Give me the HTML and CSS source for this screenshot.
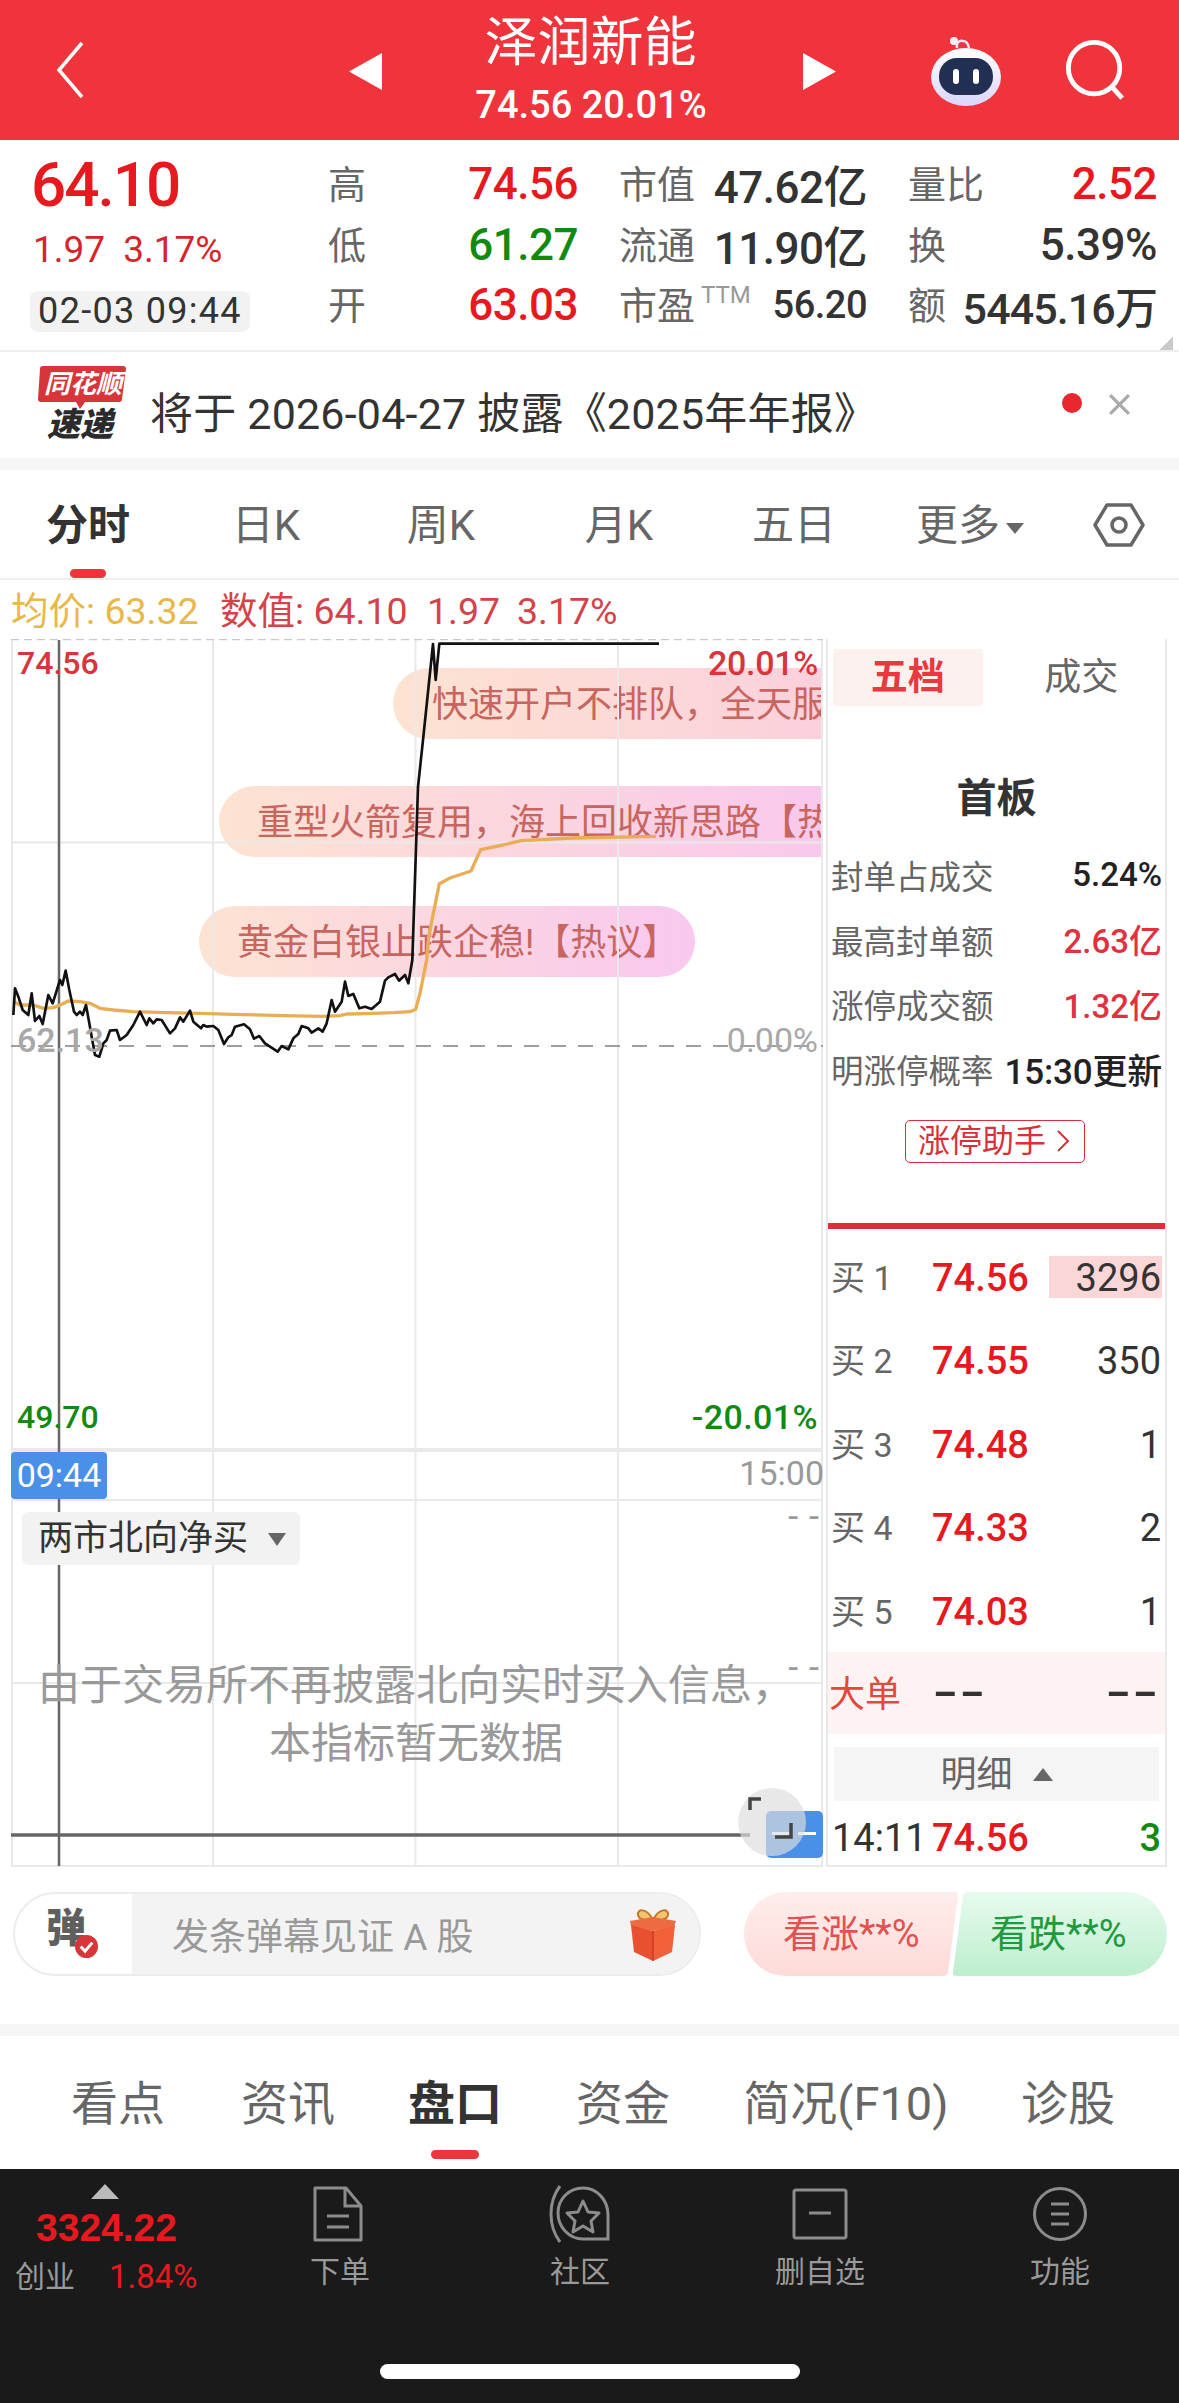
FILE: index.html
```html
<!DOCTYPE html>
<html lang="zh">
<head>
<meta charset="utf-8">
<title>泽润新能</title>
<link rel="stylesheet" href="styles.css">
</head>
<body>
<div class="app">
  <header class="hdr">
    <svg class="hdr-back" viewBox="0 0 30 58"><path d="M27 2 4 29l23 27" fill="none" stroke="#fff" stroke-width="3.5"/></svg>
    <svg class="hdr-tri" viewBox="0 0 33 37"><path d="M33 0v37L0 18.5z" fill="#fff"/></svg>
    <div class="hdr-title">
      <div class="hdr-name">泽润新能</div>
      <div class="hdr-sub">74.56 20.01%</div>
    </div>
    <svg class="hdr-tri" viewBox="0 0 33 37"><path d="M0 0v37l33-18.500z" fill="#fff"/></svg>
    <svg class="hdr-robot" viewBox="0 0 72 72">
      <defs><linearGradient id="rb" x1="0" y1="0" x2="0" y2="1"><stop offset="0" stop-color="#fff"/><stop offset="1" stop-color="#d9d6fb"/></linearGradient></defs>
      <path d="M27 14c-1-5 2-8 6-7 3 0 5 2 6 7" fill="none" stroke="#e9e4fb" stroke-width="2.500"/>
      <circle cx="24" cy="7" r="4" fill="#f1eefc"/>
      <ellipse cx="36" cy="43" rx="35" ry="29" fill="url(#rb)"/>
      <rect x="9" y="24" width="54" height="37" rx="18" fill="#232f52"/>
      <rect x="23" y="35" width="6" height="15" rx="3" fill="#fff"/>
      <rect x="43" y="35" width="6" height="15" rx="3" fill="#fff"/>
    </svg>
    <svg class="hdr-search" viewBox="0 0 64 64"><circle cx="30" cy="30" r="26.500" fill="none" stroke="#fff" stroke-width="5"/><path d="M48 49l11 12" stroke="#fff" stroke-width="5" fill="none"/></svg>
  </header>

  <section class="quote">
    <div class="q-main">
      <div class="q-price">64.10</div>
      <div class="q-change"><span>1.97</span><span>3.17%</span></div>
      <div class="q-date">02-03 09:44</div>
    </div>
    <div class="q-grid">
      <div class="q-cell"><span class="q-lab">高</span><b class="up">74.56</b></div>
      <div class="q-cell"><span class="q-lab">市值</span><b>47.62亿</b></div>
      <div class="q-cell"><span class="q-lab">量比</span><b class="up">2.52</b></div>
      <div class="q-cell"><span class="q-lab">低</span><b class="down">61.27</b></div>
      <div class="q-cell"><span class="q-lab">流通</span><b>11.90亿</b></div>
      <div class="q-cell"><span class="q-lab">换</span><b>5.39%</b></div>
      <div class="q-cell"><span class="q-lab">开</span><b class="up">63.03</b></div>
      <div class="q-cell"><span class="q-lab">市盈<small>TTM</small></span><b class="slim">56.20</b></div>
      <div class="q-cell"><span class="q-lab">额</span><b class="amt">5445.16万</b></div>
    </div>
    <i class="q-corner"></i>
  </section>

  <section class="notice">
    <div class="logo">
      <svg class="logo-bg" viewBox="0 0 90 44"><path d="M6 1h80a3 3 0 0 1 3 3l-4 30a3 3 0 0 1-3 3H48l-5 7-4-7H4a3 3 0 0 1-3-3L3 4a3 3 0 0 1 3-3z" fill="#d8353a"/></svg>
      <span class="logo-top">同花顺</span>
      <span class="logo-bot">速递</span>
    </div>
    <div class="notice-text">将于 2026-04-27 披露《2025年年报》</div>
    <i class="notice-dot"></i>
    <svg class="notice-x" viewBox="0 0 22 22"><path d="M2 2l18 18M20 2 2 20" stroke="#a9a9a9" stroke-width="3" fill="none"/></svg>
  </section>

  <div class="band"></div>

  <nav class="ktabs">
    <span class="ktab k1 on">分时<i></i></span>
    <span class="ktab k2">日K</span>
    <span class="ktab k3">周K</span>
    <span class="ktab k4">月K</span>
    <span class="ktab k5">五日</span>
    <span class="ktab k6">更多<em></em></span>
    <svg class="khex" viewBox="0 0 52 44"><path d="M14 2h24l12 20-12 20H14L2 22z" fill="none" stroke="#666" stroke-width="3.500" stroke-linejoin="round"/><circle cx="26" cy="22" r="7" fill="none" stroke="#666" stroke-width="3.500"/></svg>
  </nav>

  <div class="info">
    <span class="i-avg">均价: 63.32</span>
    <span class="i-val">数值: 64.10</span>
    <span class="i-val i-b">1.97</span>
    <span class="i-val i-c">3.17%</span>
  </div>

  <main class="trade">
    <div class="chart">
      <div class="bubble b1">快速开户不排队，全天服务</div>
      <div class="bubble b2">重型火箭复用，海上回收新思路【热议】</div>
      <div class="bubble b3">黄金白银止跌企稳!【热议】</div>

      <svg class="plot" viewBox="11 639 812 1228">
        <g stroke="#e9e9e9" stroke-width="2" fill="none">
          <path d="M12 640V1866M213 640V1866M415.500 640V1866M618 640V1866M822 640V1866"/>
          <path d="M11 842.500H823M11 1500H823M11 1683H823M11 1866H823"/>
          <path d="M11 1450H823" stroke-width="4"/>
        </g>
        <path d="M11 639.500H823" stroke="#c9c9c9" stroke-width="1.500" stroke-dasharray="8 5" fill="none"/>
        <path d="M11 1046H823" stroke="#808080" stroke-width="1.500" stroke-dasharray="15 12" fill="none"/>
        <path d="M59 640V1866" stroke="#666" stroke-width="2.500" fill="none"/>
        <path d="M11 1835H750" stroke="#666" stroke-width="3.500" fill="none"/>
        <g transform="translate(0 960) scale(.33333)" fill="none" stroke-linejoin="round">
          <polyline stroke="#e8ad55" stroke-width="10" points="40,125 60,135 100,135 130,145 160,143 185,133 205,123 240,125 270,130 300,145 340,150 400,155 500,158 600,160 700,163 850,167 970,169 1020,167 1040,162 1100,161 1180,158 1230,155 1247,148 1260,100 1280,0 1286,-69 1318,-229 1350,-246 1413,-267 1442,-331 1509,-345 1564,-358 1715,-366 1968,-371"/>
          <polyline stroke="#111" stroke-width="8" points="40,165 45,85 55,110 68,150 85,165 95,100 105,183 118,168 128,192 145,105 158,130 180,60 187,75 197,32 208,90 222,155 230,165 240,155 248,165 258,135 268,190 275,230 285,285 298,290 310,250 320,240 330,212 350,210 360,240 380,225 400,195 420,155 440,195 448,175 460,190 470,178 485,180 510,220 525,205 540,172 550,185 570,152 580,185 603,205 610,195 620,200 640,198 655,210 672,252 685,232 695,225 705,200 732,193 750,208 762,236 778,228 795,250 833,275 845,258 865,268 880,235 895,222 905,198 925,205 935,218 955,205 968,215 980,190 995,120 1005,155 1025,125 1035,65 1045,108 1060,102 1078,145 1095,140 1115,147 1140,125 1155,62 1165,52 1185,42 1197,62 1215,45 1225,70 1237,0 1254,-519 1270,-669 1299,-948 1307,-840 1318,-949 1977,-949"/>
        </g>
      </svg>

      <span class="lab l-hi">74.56</span>
      <span class="lab l-hip">20.01%</span>
      <span class="lab l-mid">62.13</span>
      <span class="lab l-midp">0.00%</span>
      <span class="lab l-lo">49.70</span>
      <span class="lab l-lop">-20.01%</span>
      <span class="time-now">09:44</span>
      <span class="lab l-end">15:00</span>

      <div class="ind">两市北向净买<i></i></div>
      <span class="lab l-d1">- -</span>
      <span class="lab l-d2">- -</span>
      <p class="nodata">由于交易所不再披露北向实时买入信息，<br>本指标暂无数据</p>

      <div class="expand-box"><i></i></div>
      <div class="expand">
        <svg viewBox="0 0 68 68"><path d="M12 22V11h11M53 35v14H37" fill="none" stroke="#444" stroke-width="3.500"/></svg>
      </div>
    </div>

    <aside class="side">
      <div class="s-tabs"><span class="s-tab on">五档</span><span class="s-tab">成交</span></div>
      <h2 class="s-title">首板</h2>
      <div class="s-row"><span>封单占成交</span><b>5.24%</b></div>
      <div class="s-row"><span>最高封单额</span><b class="red">2.63亿</b></div>
      <div class="s-row"><span>涨停成交额</span><b class="red">1.32亿</b></div>
      <div class="s-row"><span>明涨停概率</span><b class="wide">15:30更新</b></div>
      <div class="s-btn-wrap"><span class="s-btn">涨停助手<svg viewBox="0 0 14 24"><path d="M2 2l10 10L2 22" fill="none" stroke="#d8313a" stroke-width="2"/></svg></span></div>
      <div class="s-rule"></div>
      <div class="book">
        <div class="b-row"><span class="b-l">买 1</span><b class="b-p">74.56</b><span class="b-v b-fill">3296</span></div>
        <div class="b-row"><span class="b-l">买 2</span><b class="b-p">74.55</b><span class="b-v">350</span></div>
        <div class="b-row"><span class="b-l">买 3</span><b class="b-p">74.48</b><span class="b-v">1</span></div>
        <div class="b-row"><span class="b-l">买 4</span><b class="b-p">74.33</b><span class="b-v">2</span></div>
        <div class="b-row"><span class="b-l">买 5</span><b class="b-p">74.03</b><span class="b-v">1</span></div>
      </div>
      <div class="big"><span class="big-l">大单</span><b class="big-a">--</b><b class="big-b">--</b></div>
      <div class="detail">明细<i></i></div>
      <div class="tick"><span class="t-t">14:11</span><b class="t-p">74.56</b><span class="t-v">3</span></div>
    </aside>
  </main>

  <section class="bar">
    <div class="input">
      <div class="input-l"><span class="dan">弹</span>
        <svg class="dan-check" viewBox="0 0 24 24"><circle cx="12" cy="12" r="12" fill="#d9363a"/><path d="M6 12l4.500 5L18 8" fill="none" stroke="#fff" stroke-width="3"/></svg>
      </div>
      <div class="input-r">
        <span>发条弹幕见证 A 股</span>
        <svg class="gift" viewBox="0 0 50 54">
          <path d="M25 13C19 1 9 1 10 8c1 5 9 6 15 5zM25 13c6-12 16-12 15-5-1 5-9 6-15 5z" fill="#f2c46d" stroke="#c9772c" stroke-width="2"/>
          <path d="M2 14 25 10l23 4-2 5L25 24 3 19z" fill="#ee6a41"/>
          <path d="M3 18l22 6v30L6 45z" fill="#e8502f"/>
          <path d="M47 18 25 24v30l19-9z" fill="#f0613a"/>
          <path d="M25 24v30" stroke="#c83c22" stroke-width="1.500"/>
        </svg>
      </div>
    </div>
    <div class="vote">
      <span class="v-up">看涨**%</span>
      <span class="v-down">看跌**%</span>
    </div>
  </section>

  <div class="band band2"></div>

  <nav class="btabs">
    <span class="btab t1">看点</span>
    <span class="btab t2">资讯</span>
    <span class="btab t3 on">盘口<i></i></span>
    <span class="btab t4">资金</span>
    <span class="btab t5">简况(F10)</span>
    <span class="btab t6">诊股</span>
  </nav>

  <footer class="dock">
    <div class="dock-idx">
      <i class="idx-tri"></i>
      <div class="idx-val">3324.22</div>
      <div class="idx-row"><span>创业</span><b>1.84%</b></div>
    </div>
    <div class="dock-item">
      <svg class="ic-doc" viewBox="0 0 56 56"><path d="M5 2h31l15 18v34H5z" fill="none" stroke="#8c8c8c" stroke-width="3" stroke-linejoin="round"/><path d="M35 2v18h16M17 30h22M17 41h22" fill="none" stroke="#8c8c8c" stroke-width="3"/></svg>
      <span>下单</span>
    </div>
    <div class="dock-item">
      <svg class="ic-star" viewBox="0 0 62 56"><path d="M11 0C-1 16-1 40 11 56" fill="none" stroke="#8c8c8c" stroke-width="3"/><path d="M34 2c14 0 25 12 25 27v24H34C20 53 9 41 9 27S20 2 34 2z" fill="none" stroke="#8c8c8c" stroke-width="3"/><path d="M34 15l5 11 11 1-8 8 2 11-10-6-10 6 2-11-8-8 11-1z" fill="none" stroke="#8c8c8c" stroke-width="3" stroke-linejoin="round"/></svg>
      <span>社区</span>
    </div>
    <div class="dock-item">
      <svg viewBox="0 0 56 56"><rect x="2" y="4" width="52" height="48" rx="2" fill="none" stroke="#8c8c8c" stroke-width="3"/><path d="M17 27h22" stroke="#8c8c8c" stroke-width="3"/></svg>
      <span>删自选</span>
    </div>
    <div class="dock-item">
      <svg viewBox="0 0 56 56"><circle cx="28" cy="28" r="25.500" fill="none" stroke="#8c8c8c" stroke-width="3"/><path d="M19 18h18M19 28h18M19 38h18" stroke="#8c8c8c" stroke-width="3"/></svg>
      <span>功能</span>
    </div>
    <i class="home"></i>
  </footer>
</div>
</body>
</html>
```
FILE: styles.css
```css
* { box-sizing: border-box; }
html, body { margin: 0; padding: 0; background: #fff; }
body { font-family: Roboto, "Noto Sans CJK SC", sans-serif; color: #333; }
i, em { font-style: normal; }
b { font-weight: 500; }
.app { width: 1179px; height: 2403px; overflow: hidden; position: relative; background: #fff; }

/* header */
.hdr { height: 140px; background: #f0343c; display: flex; align-items: center; padding-left: 55px; color: #fff; }
.hdr-back { width: 30px; height: 58px; margin-right: 264px; }
.hdr-tri { width: 33px; height: 37px; margin-top: 2px; }
.hdr-title { width: 421px; text-align: center; margin-top: 6px; }
.hdr-name { font-size: 53px; line-height: 62px; margin-top: -8px; padding-right: 4px; }
.hdr-sub { font-size: 38px; line-height: 42px; margin-top: 10px; font-weight: 500; padding-right: 3px; }
.hdr-robot { width: 72px; height: 72px; margin-left: 94px; margin-top: 0; }
.hdr-search { width: 62px; height: 62px; margin-left: 63px; }

/* quote */
.quote { height: 212px; display: flex; border-bottom: 2px solid #eeeeee; position: relative; padding-top: 14px; }
.q-main { width: 328px; padding-left: 30px; }
.q-price { font-size: 62px; line-height: 62px; color: #e8181f; font-weight: 500; margin-left: 1px; letter-spacing: -2px; }
.q-change { font-size: 37px; line-height: 44px; color: #d9232b; margin-top: 12px; margin-left: 3px; display: flex; gap: 18px; }
.q-date { width: 220px; height: 41px; background: #f2f2f2; border-radius: 8px; font-size: 36px; line-height: 41px; text-align: center; margin-top: 19px; white-space: nowrap; letter-spacing: 1.300px; }
.q-grid { display: grid; grid-template-columns: 250px 248px 249px; column-gap: 41px; grid-auto-rows: 60.500px; height: 182px; }
.q-cell { display: flex; justify-content: space-between; align-items: center; white-space: nowrap; }
.q-cell b { font-size: 44px; color: #333; letter-spacing: -.500px; }
.q-cell b.slim { font-size: 38px; }
.q-cell b.amt { font-size: 43px; letter-spacing: -.900px; }
.q-lab { font-size: 38px; color: #666; display: flex; align-items: flex-start; margin-top: -5px; }
.q-lab small { font-size: 24px; color: #999; margin-left: 6px; line-height: 40px; }
.q-cell b.up { color: #e8181f; }
.q-cell b.down { color: #128a12; }
.q-corner { position: absolute; right: 6px; bottom: 0; width: 14px; height: 14px; background: linear-gradient(135deg, transparent 50%, #c9c9c9 50%); }

/* notice */
.notice { height: 106px; display: flex; align-items: center; padding-left: 37px; position: relative; }
.logo { width: 90px; height: 76px; position: relative; margin-top: -5px; flex: none; }
.logo-bg { position: absolute; left: 0; top: 0; width: 90px; height: 44px; }
.logo-top { position: absolute; left: 4px; top: 4px; width: 84px; text-align: center; color: #fff; font-size: 26px; line-height: 30px; font-weight: 700; font-style: italic; }
.logo-bot { position: absolute; left: 10px; top: 43px; color: #2b2b2b; font-size: 33px; line-height: 34px; font-weight: 900; font-style: italic; }
.notice-text { font-size: 43px; line-height: 60px; margin: 18px 0 0 23px; color: #333; white-space: nowrap; letter-spacing: .2px; }
.notice-dot { position: absolute; left: 1062px; top: 41px; width: 20px; height: 20px; border-radius: 50%; background: #e8272f; }
.notice-x { position: absolute; left: 1108px; top: 41px; width: 23px; height: 23px; }
.band { height: 12px; background: #f6f6f6; }

/* K tabs */
.ktabs { height: 110px; position: relative; border-bottom: 2px solid #efefef; }
.ktab { position: absolute; top: 27px; font-size: 42px; line-height: 58px; color: #666; transform: translateX(-50%); white-space: nowrap; }
.ktab.on { color: #333; font-weight: 700; }
.ktab.on i { position: absolute; left: 50%; margin-left: -18px; top: 72px; width: 36px; height: 9px; border-radius: 5px; background: #f0343c; }
.k1 { left: 88px; }
.k2 { left: 266px; }
.k3 { left: 441px; }
.k4 { left: 619px; }
.k5 { left: 794px; }
.k6 { left: 970px; }
.ktab em { display: inline-block; width: 0; height: 0; border-left: 9px solid transparent; border-right: 9px solid transparent; border-top: 11px solid #666; margin-left: 6px; vertical-align: 6px; }
.khex { position: absolute; left: 1093px; top: 33px; width: 52px; height: 44px; }

/* info */
.info { height: 59px; position: relative; font-size: 37.500px; line-height: 62px; }
.info span { position: absolute; top: 0; white-space: nowrap; }
.i-avg { left: 11px; color: #e8b84b; }
.i-val { left: 220px; color: #d4434a; }
.info .i-b { left: 427px; }
.info .i-c { left: 517px; }

/* trade */
.trade { display: flex; padding-left: 11px; height: 1228px; }
.chart { width: 815px; height: 1228px; position: relative; overflow: hidden; flex: none; }
.plot { position: absolute; left: 0; top: 0; width: 812px; height: 1228px; }
.bubble { position: absolute; height: 71px; border-radius: 36px; font-size: 36px; line-height: 74px; color: #c8655f; white-space: nowrap; overflow: hidden; }
.b1 { left: 382px; top: 29px; width: 430px; border-radius: 36px 0 0 36px; padding-left: 39px; background: linear-gradient(90deg, #fde3d2, #fbd0dc); }
.b2 { left: 208px; top: 147px; width: 604px; border-radius: 36px 0 0 36px; padding-left: 38px; background: linear-gradient(90deg, #fde3d2, #f9c8ec); }
.b3 { left: 188px; top: 267px; width: 496px; padding-left: 38px; background: linear-gradient(90deg, #fde3d2, #f9c8ef); }
.lab { position: absolute; white-space: nowrap; font-size: 32px; line-height: 40px; }
.l-hi { left: 6px; top: 4px; color: #d9343c; font-weight: 500; }
.l-hip { right: 8px; top: 4px; color: #d9343c; font-size: 34px; font-weight: 500; letter-spacing: -.3px; }
.l-mid { left: 6px; top: 381px; color: #a8a8a8; font-size: 34px; font-weight: 500; }
.l-midp { right: 8px; top: 381px; color: #a8a8a8; font-size: 34px; }
.l-lo { left: 6px; top: 758px; color: #128a12; font-weight: 500; }
.l-lop { right: 8px; top: 758px; color: #128a12; font-size: 34px; font-weight: 500; letter-spacing: .4px; }
.l-end { right: 2px; top: 814px; color: #999; font-size: 34px; }
.time-now { position: absolute; left: 0; top: 813px; width: 96px; height: 47px; border-radius: 4px; background: #4a90e9; color: #fff; font-size: 34px; line-height: 47px; text-align: center; }
.ind { position: absolute; left: 11px; top: 873px; width: 278px; height: 53px; border-radius: 6px; background: #f2f2f2; font-size: 35px; line-height: 53px; padding-left: 16px; color: #333; }
.ind i { position: absolute; left: 246px; top: 21px; width: 0; height: 0; border-left: 9px solid transparent; border-right: 9px solid transparent; border-top: 13px solid #666; }
.l-d1 { right: 6px; top: 858px; color: #999; letter-spacing: 1px; font-size: 36px; }
.l-d2 { right: 6px; top: 1009px; color: #999; letter-spacing: 1px; font-size: 36px; }
.nodata { position: absolute; left: 1px; top: 1018px; width: 808px; margin: 0; text-align: center; font-size: 42px; line-height: 58px; color: #999; }
.expand-box { position: absolute; left: 755px; top: 1172px; width: 57px; height: 47px; border-radius: 5px; background: #4a90e9; }
.expand-box i { position: absolute; left: 6px; top: 21px; width: 44px; height: 3px; background: repeating-linear-gradient(90deg, #fff 0 18px, transparent 18px 26px); }
.expand { position: absolute; left: 727px; top: 1149px; width: 68px; height: 68px; border-radius: 50%; background: rgba(221, 221, 221, .68); }
.expand svg { width: 68px; height: 68px; display: block; }

/* side */
.side { width: 341px; height: 1228px; flex: none; border: 2px solid #e9e9e9; border-top: 0; padding-top: 10px; }
.s-tabs { display: flex; height: 57px; }
.s-tab { width: 152px; margin-left: 5px; font-size: 37px; line-height: 57px; text-align: center; color: #666; }
.s-tab + .s-tab { width: 170px; margin-left: 15px; }
.s-tab.on { background: #fdf1f0; color: #e8393f; font-weight: 700; border-radius: 4px; }
.s-title { margin: 63px 0 13px; font-size: 40px; line-height: 60px; font-weight: 700; text-align: center; color: #333; }
.s-row { height: 64.700px; display: flex; justify-content: space-between; align-items: center; padding: 0 3px; font-size: 32.500px; color: #666; white-space: nowrap; }
.s-row b { color: #222; font-size: 33px; font-weight: 500; }
.s-row b.wide { font-size: 35px; letter-spacing: -.2px; }
.s-row b.red { color: #e0323e; }
.s-btn-wrap { text-align: center; margin-top: 19px; height: 43px; padding-right: 3px; }
.s-btn { display: inline-flex; align-items: center; width: 180px; height: 43px; border: 1.500px solid #d8313a; border-radius: 5px; font-size: 32px; line-height: 40px; color: #d8313a; padding-left: 12px; white-space: nowrap; }
.s-btn svg { width: 14px; height: 24px; margin-left: 10px; }
.s-rule { height: 6px; background: #d8313a; margin-top: 60px; }
.book { padding-top: 6px; }
.b-row { height: 83.500px; position: relative; font-size: 36px; line-height: 86px; white-space: nowrap; padding-right: 4px; text-align: right; }
.b-l { position: absolute; left: 3px; top: 0; font-size: 34px; color: #666; }
.b-p { position: absolute; left: 104px; top: 0; font-size: 38px; color: #e8181f; }
.b-v { font-size: 38px; color: #333; position: relative; z-index: 0; }
.b-v.b-fill::before { content: ""; position: absolute; z-index: -1; right: -1px; top: 0; width: 113px; height: 42px; background: #fbd6d6; }
.big { height: 82px; position: relative; background: #fef3f3; line-height: 86px; }
.big-l { position: absolute; left: 1px; font-size: 36px; color: #e0493f; }
.big-a { position: absolute; left: 104px; top: -2px; font-size: 38px; font-weight: 700; transform: scaleX(1.800); transform-origin: left center; }
.big-b { position: absolute; right: 6px; top: -2px; font-size: 38px; font-weight: 700; transform: scaleX(1.800); transform-origin: right center; }
.detail { height: 54px; margin: 13px 6px 0; background: #f5f5f5; font-size: 36px; line-height: 56px; text-align: center; color: #666; padding-right: 40px; position: relative; }
.detail i { position: absolute; left: 199px; top: 21px; width: 0; height: 0; border-left: 10px solid transparent; border-right: 10px solid transparent; border-bottom: 13px solid #666; }
.tick { height: 62px; position: relative; font-size: 38px; line-height: 74px; white-space: nowrap; }
.t-t { position: absolute; left: 4px; color: #333; }
.t-p { position: absolute; left: 104px; color: #e8181f; font-weight: 500; }
.t-v { position: absolute; right: 4px; color: #128a12; font-weight: 500; }

/* input bar */
.bar { display: flex; height: 84px; margin-top: 25px; padding-left: 13px; }
.input { width: 688px; height: 84px; display: flex; border: 2px solid #ececec; border-radius: 42px; overflow: hidden; flex: none; }
.input-l { width: 117px; position: relative; flex: none; }
.dan { position: absolute; left: 31px; top: 10px; font-size: 40px; line-height: 50px; font-weight: 900; color: #5f5f5f; }
.dan-check { position: absolute; left: 60px; top: 41px; width: 23px; height: 23px; }
.input-r { flex: 1; background: #f3f3f3; display: flex; align-items: center; justify-content: space-between; padding-left: 40px; padding-right: 21px; font-size: 37px; color: #999; white-space: nowrap; }
.gift { width: 50px; height: 54px; }
.vote { display: flex; margin-left: 43px; }
.v-up, .v-down { height: 84px; font-size: 38px; line-height: 84px; white-space: nowrap; }
.v-up { width: 214px; background: linear-gradient(180deg, #feeeeb, #fddad8); color: #e0524f; padding-left: 39px; clip-path: path("M42 0H211Q215 0 214 4L204 80Q203 84 199 84H42A42 42 0 0 1 42 0Z"); }
.v-down { width: 215px; margin-left: -6px; background: linear-gradient(180deg, #e7fbef, #bdeecd); color: #1f9a3f; padding-left: 38px; clip-path: path("M16 0H173A42 42 0 0 1 173 84H5Q0 84 1 80L11 4Q12 0 16 0Z"); }
.band2 { margin-top: 48px; }

/* bottom tabs */
.btabs { height: 132px; position: relative; }
.btab { position: absolute; top: 35px; font-size: 47px; line-height: 66px; color: #666; transform: translateX(-50%); white-space: nowrap; }
.btab.on { color: #333; font-weight: 700; }
.btab.on i { position: absolute; left: 50%; margin-left: -24px; top: 79px; width: 48px; height: 9px; border-radius: 5px; background: #f0343c; }
.t1 { left: 118px; }
.t2 { left: 288px; }
.t3 { left: 455px; }
.t4 { left: 623px; }
.t5 { left: 846px; }
.t6 { left: 1068px; }

/* dock */
.dock { position: absolute; left: 0; right: 0; bottom: 0; height: 234px; background: #1a1a1a; display: flex; }
.dock-idx { width: 220px; position: relative; flex: none; }
.idx-tri { position: absolute; left: 91px; top: 15px; width: 0; height: 0; border-left: 14px solid transparent; border-right: 14px solid transparent; border-bottom: 15px solid #bbb; }
.idx-val { position: absolute; left: 36px; top: 35px; font-family: "Liberation Sans", sans-serif; font-size: 39px; line-height: 48px; font-weight: 700; color: #e8181f; }
.idx-row { position: absolute; left: 15px; top: 86px; display: flex; gap: 34px; font-size: 30px; line-height: 44px; color: #999; white-space: nowrap; }
.idx-row b { color: #e8181f; font-size: 33px; font-weight: 400; }
.dock-item { width: 240px; display: flex; flex-direction: column; align-items: center; padding-top: 16px; font-size: 30px; line-height: 40px; color: #999; flex: none; }
.dock-item svg { width: 56px; height: 58px; margin-bottom: 9px; flex: none; }
.dock-item svg.ic-doc { margin-left: -5px; }
.dock-item svg.ic-star { width: 62px; }
.home { position: absolute; left: 380px; top: 195px; width: 420px; height: 15px; border-radius: 8px; background: #fff; }
```
